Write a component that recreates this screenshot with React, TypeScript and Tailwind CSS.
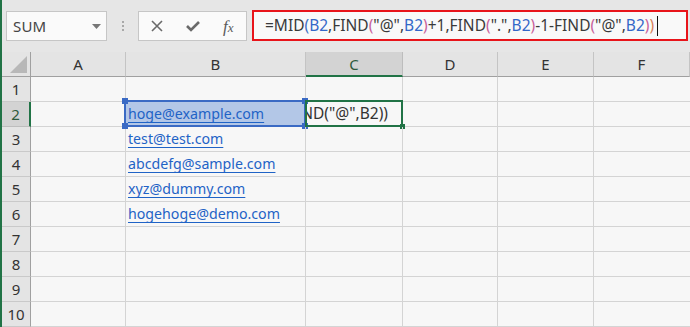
import React from "react";

const FONT = { fontFamily: '"Noto Sans", "Noto Sans CJK JP", sans-serif' };

const rows = [1, 2, 3, 4, 5, 6, 7, 8, 9, 10];
const colLetters = ["A", "B", "C", "D", "E", "F"];
const emails: Record<number, string> = {
  2: "hoge@example.com",
  3: "test@test.com",
  4: "abcdefg@sample.com",
  5: "xyz@dummy.com",
  6: "hogehoge@demo.com",
};

function Formula() {
  const ref = "text-[#3467c8]";
  const p1 = "text-[#3f6fc4]";
  const p2 = "text-[#c8609a]";
  const p3 = "text-[#d8805a]";
  return (
    <span className="text-[#3a3a3a] whitespace-nowrap">
      =MID<span className={p1}>(</span>
      <span className={ref}>B2</span>,FIND<span className={p2}>(</span>"@",
      <span className={ref}>B2</span>
      <span className={p2}>)</span>+1,FIND<span className={p2}>(</span>".",
      <span className={ref}>B2</span>
      <span className={p2}>)</span>-1-FIND<span className={p2}>(</span>"@",
      <span className={ref}>B2</span>
      <span className={p2}>)</span>
      <span className={p3}>)</span>
    </span>
  );
}

function TopBar() {
  return (
    <div className="h-[52px] bg-[#e6e6e6] flex items-start pt-[11px] pl-[4px]">
      <div className="w-[101px] h-[30px] bg-[#fafafa] border border-[#c6c6c6] flex items-center justify-between pl-[6px] pr-[5px]">
        <span className="text-[15px] text-[#444] tracking-[0.2px]">SUM</span>
        <svg width="9" height="5" viewBox="0 0 9 5">
          <polygon points="0,0 9,0 4.5,5" fill="#777" />
        </svg>
      </div>
      <div className="w-[31px] h-[30px] flex flex-col items-center justify-center gap-[2px]">
        <span className="w-[2px] h-[2px] bg-[#a8a8a8]" />
        <span className="w-[2px] h-[2px] bg-[#a8a8a8]" />
        <span className="w-[2px] h-[2px] bg-[#a8a8a8]" />
      </div>
      <div className="w-[109px] h-[30px] bg-[#fafafa] border border-[#c6c6c6] flex items-center">
        <div className="w-[37px] flex justify-center">
          <svg width="12" height="12" viewBox="0 0 12 12">
            <path d="M1 1 L11 11 M11 1 L1 11" stroke="#6a6a6a" strokeWidth="1.6" />
          </svg>
        </div>
        <div className="w-[36px] flex justify-center">
          <svg width="14" height="12" viewBox="0 0 14 12">
            <path d="M1 6 L5 10 L13 2" stroke="#6a6a6a" strokeWidth="2.6" fill="none" />
          </svg>
        </div>
        <div className="w-[36px] flex justify-center">
          <span
            className="italic text-[#5a5a5a] text-[17px] leading-none"
            style={{ fontFamily: '"Liberation Serif", serif' }}
          >
            f<span className="text-[13px]">x</span>
          </span>
        </div>
      </div>
      <div className="ml-[5px] -mt-[1px] w-[436px] h-[31px] border-2 border-[#e8141a] bg-[#f9f9f9] flex items-center pl-[11px]">
        <span className="text-[15.5px] leading-none flex items-center">
          <Formula />
          <span className="ml-[3px] w-[1px] h-[20px] bg-[#111] inline-block" />
        </span>
      </div>
    </div>
  );
}

function Grid() {
  return (
    <div className="grid grid-cols-[29px_95px_180px_97px_95px_96px_1fr] grid-rows-[25px_repeat(10,25px)] bg-[#f7f7f7]">
      <div className="bg-[#e4e4e4] border-b border-r border-[#a0a0a0] relative">
        <svg className="absolute right-[3px] bottom-[3px]" width="17" height="17" viewBox="0 0 17 17">
          <polygon points="17,0 17,17 0,17" fill="#b8b8b8" />
        </svg>
      </div>
      {colLetters.map((c) => (
        <div
          key={c}
          className={
            c === "C"
              ? "bg-[#d3d3d3] border-b-2 border-b-[#217346] border-r border-r-[#bdbdbd] flex items-center justify-center text-[15px] text-[#2e5a3c] pt-[2px]"
              : "bg-[#e4e4e4] border-b border-b-[#a0a0a0] border-r border-r-[#c4c4c4] flex items-center justify-center text-[15px] text-[#333]"
          }
        >
          {c}
        </div>
      ))}
      {rows.map((r) => (
        <React.Fragment key={r}>
          <div
            className={
              r === 2
                ? "bg-[#d3d3d3] border-r-2 border-r-[#217346] border-b border-b-[#bdbdbd] flex items-center justify-center text-[15px] text-[#2e5a3c]"
                : "bg-[#e4e4e4] border-r border-r-[#a0a0a0] border-b border-b-[#c9c9c9] flex items-center justify-center text-[15px] text-[#333]"
            }
          >
            {r}
          </div>
          <div className="border-r border-b border-[#d4d4d4]" />
          <div
            className={
              "border-r border-b border-[#d4d4d4] relative flex items-end pl-[2px] pb-[3px] " +
              (r === 2 ? "bg-[#b3c7e7]" : "")
            }
          >
            {emails[r] && (
              <span className="text-[14.2px] leading-[19px] text-[#1f63c6] underline decoration-[#1f63c6] underline-offset-[3px] whitespace-nowrap">
                {emails[r]}
              </span>
            )}
            {r === 2 && (
              <>
                <div className="absolute -left-[2px] -top-[2px] -right-[1px] -bottom-[1px] border-2 border-[#3a6ac4] pointer-events-none" />
                <div className="absolute -left-[4px] -top-[4px] w-[6px] h-[6px] bg-[#3a6ac4]" />
                <div className="absolute -left-[4px] -bottom-[3px] w-[6px] h-[6px] bg-[#3a6ac4]" />
                <div className="absolute -right-[3px] -top-[4px] w-[6px] h-[6px] bg-[#3a6ac4]" />
                <div className="absolute -right-[3px] -bottom-[3px] w-[6px] h-[6px] bg-[#3a6ac4]" />
              </>
            )}
          </div>
          <div className="border-r border-b border-[#d4d4d4] relative">
            {r === 2 && (
              <>
                <div className="absolute inset-0 overflow-hidden flex items-end justify-end pr-[14px] pb-[3px]">
                  <span className="text-[15.5px] leading-[19px] text-[#333] whitespace-nowrap">
                    ND("@",B2))
                  </span>
                </div>
                <div className="absolute -left-[1px] -top-[2px] -right-[1px] -bottom-[1px] border-2 border-[#217346]" />
                <div className="absolute -right-[3px] -bottom-[3px] w-[5px] h-[5px] bg-[#217346]" />
              </>
            )}
          </div>
          <div className="border-r border-b border-[#d4d4d4]" />
          <div className="border-r border-b border-[#d4d4d4]" />
          <div className="border-b border-[#d4d4d4]" />
        </React.Fragment>
      ))}
    </div>
  );
}

export default function App() {
  return (
    <div className="w-[690px] h-[327px] overflow-hidden border-l-2 border-[#217346] bg-[#e6e6e6]" style={FONT}>
      <TopBar />
      <Grid />
    </div>
  );
}
